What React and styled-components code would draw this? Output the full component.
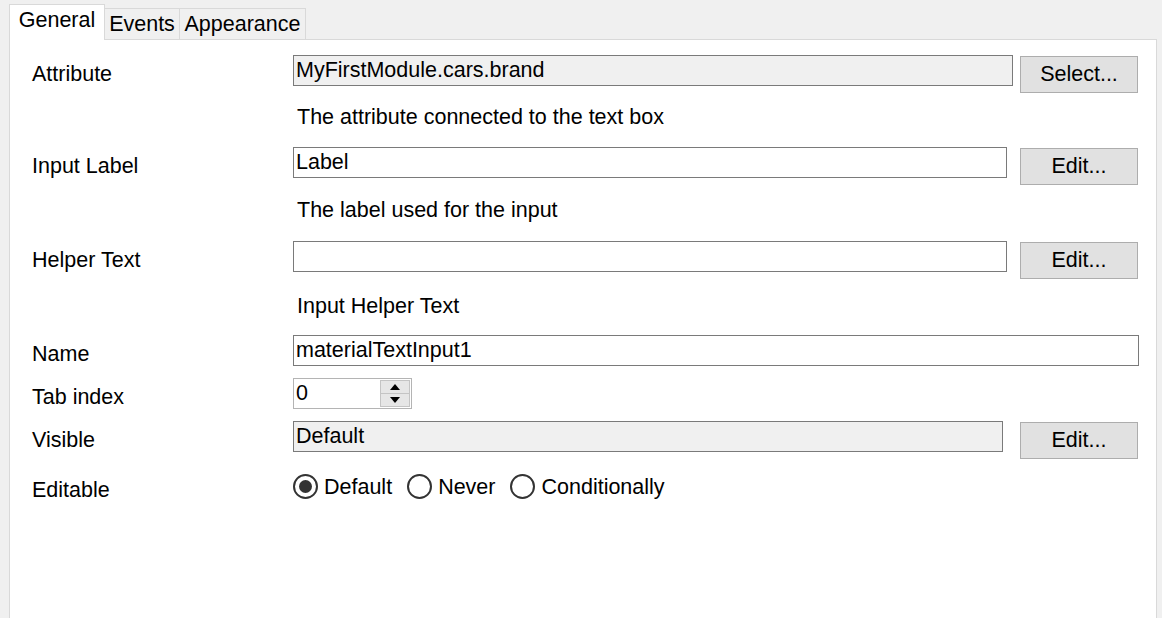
import React from "react";
import styled, { createGlobalStyle } from "styled-components";

const GlobalStyle = createGlobalStyle`
  html, body {
    margin: 0;
    padding: 0;
    overflow: hidden;
    background: #f0f0f0;
  }
  body {
    font-family: "Liberation Sans", Arial, sans-serif;
    font-size: 21.5px;
    color: #000000;
  }
`;

const Page = styled.div`
  padding-top: 4px;
`;

const TabBar = styled.div`
  display: flex;
  align-items: flex-end;
  padding-left: 9px;
  height: 35px;
`;

const Tab = styled.div`
  position: relative;
  box-sizing: border-box;
  width: ${props => props.$width}px;
  height: ${props => (props.$active ? 36 : 31)}px;
  margin-bottom: ${props => (props.$active ? -1 : 0)}px;
  margin-left: ${props => (props.$first ? 0 : -1)}px;
  padding-top: 3px;
  line-height: 24px;
  text-align: center;
  background: ${props => (props.$active ? "#ffffff" : "#f0f0f0")};
  border: 1px solid #d9d9d9;
  border-bottom: none;
  z-index: ${props => (props.$active ? 2 : 1)};
`;

const Panel = styled.div`
  box-sizing: border-box;
  margin-left: 9px;
  width: 1148px;
  height: calc(100vh - 39px);
  background: #ffffff;
  border: 1px solid #d9d9d9;
  border-bottom: none;
  padding: 15px 17px 0 22px;
`;

const Row = styled.div`
  display: flex;
  align-items: flex-start;
  margin-top: ${props => props.$mt || 0}px;
`;

const Label = styled.div`
  flex: none;
  width: 261px;
  margin-top: 7px;
  line-height: 24px;
`;

const Field = styled.div`
  flex: 1;
  display: flex;
  align-items: flex-start;
`;

const TextBox = styled.div`
  flex: 1;
  box-sizing: border-box;
  height: 31px;
  padding: 0 2px;
  line-height: 29px;
  border: 1px solid #7a7a7a;
  background: ${props => (props.$readOnly ? "#f0f0f0" : "#ffffff")};
  margin-right: ${props => props.$gap || 0}px;
  white-space: nowrap;
  overflow: hidden;
`;

const Button = styled.div`
  flex: none;
  box-sizing: border-box;
  width: 118px;
  height: 37px;
  margin: 1px 1px 0 0;
  line-height: 35px;
  text-align: center;
  background: #e1e1e1;
  border: 1px solid #adadad;
`;

const Description = styled.div`
  margin-left: 265px;
  margin-top: ${props => props.$mt}px;
  line-height: 24px;
`;

const SpinBox = styled.div`
  display: flex;
  box-sizing: border-box;
  width: 119px;
  height: 31px;
  border: 1px solid #b4b4b4;
  background: #ffffff;
`;

const SpinValue = styled.div`
  flex: 1;
  padding: 0 2px;
  line-height: 29px;
`;

const SpinButtons = styled.div`
  display: flex;
  flex-direction: column;
  width: 31px;
  padding: 1px 1px 1px 0;
  box-sizing: border-box;
`;

const SpinButton = styled.div`
  flex: 1;
  display: flex;
  align-items: center;
  justify-content: center;
  background: #e6e6e6;
  border: 1px solid #c4c4c4;
  margin-top: ${props => (props.$down ? -1 : 0)}px;
`;

const RadioGroup = styled.div`
  display: flex;
  align-items: center;
  margin-top: 3px;
`;

const RadioItem = styled.div`
  display: flex;
  align-items: center;
  gap: 6px;
  margin-right: 15px;
  line-height: 24px;
`;

const RadioCircle = styled.span`
  box-sizing: border-box;
  width: 25px;
  height: 25px;
  border: 2px solid #333333;
  border-radius: 50%;
  display: flex;
  align-items: center;
  justify-content: center;
  &::after {
    content: "";
    width: 13px;
    height: 13px;
    border-radius: 50%;
    background: ${props => (props.$checked ? "#333333" : "transparent")};
  }
`;

const Arrow = ({ up }) => (
  <svg width="10" height="6" viewBox="0 0 10 6">
    <polygon points={up ? "5,0 10,6 0,6" : "0,0 10,0 5,6"} fill="#000" />
  </svg>
);

const Radio = ({ checked, children }) => (
  <RadioItem>
    <RadioCircle $checked={checked} />
    <span>{children}</span>
  </RadioItem>
);

export default function App() {
  return (
    <Page>
      <GlobalStyle />
      <TabBar>
        <Tab $active $first $width={96}>General</Tab>
        <Tab $width={76}>Events</Tab>
        <Tab $width={127}>Appearance</Tab>
      </TabBar>
      <Panel>
        <Row>
          <Label>Attribute</Label>
          <Field>
            <TextBox $readOnly $gap={7}>MyFirstModule.cars.brand</TextBox>
            <Button>Select...</Button>
          </Field>
        </Row>
        <Description $mt={12}>The attribute connected to the text box</Description>

        <Row $mt={18}>
          <Label>Input Label</Label>
          <Field>
            <TextBox $gap={13}>Label</TextBox>
            <Button>Edit...</Button>
          </Field>
        </Row>
        <Description $mt={13}>The label used for the input</Description>

        <Row $mt={19}>
          <Label>Helper Text</Label>
          <Field>
            <TextBox $gap={13} />
            <Button>Edit...</Button>
          </Field>
        </Row>
        <Description $mt={15}>Input Helper Text</Description>

        <Row $mt={17}>
          <Label>Name</Label>
          <Field>
            <TextBox>materialTextInput1</TextBox>
          </Field>
        </Row>

        <Row $mt={12}>
          <Label>Tab index</Label>
          <Field>
            <SpinBox>
              <SpinValue>0</SpinValue>
              <SpinButtons>
                <SpinButton>
                  <Arrow up />
                </SpinButton>
                <SpinButton $down>
                  <Arrow />
                </SpinButton>
              </SpinButtons>
            </SpinBox>
          </Field>
        </Row>

        <Row $mt={12}>
          <Label>Visible</Label>
          <Field>
            <TextBox $readOnly $gap={17}>Default</TextBox>
            <Button>Edit...</Button>
          </Field>
        </Row>

        <Row $mt={12}>
          <Label>Editable</Label>
          <RadioGroup>
            <Radio checked>Default</Radio>
            <Radio>Never</Radio>
            <Radio>Conditionally</Radio>
          </RadioGroup>
        </Row>
      </Panel>
    </Page>
  );
}
